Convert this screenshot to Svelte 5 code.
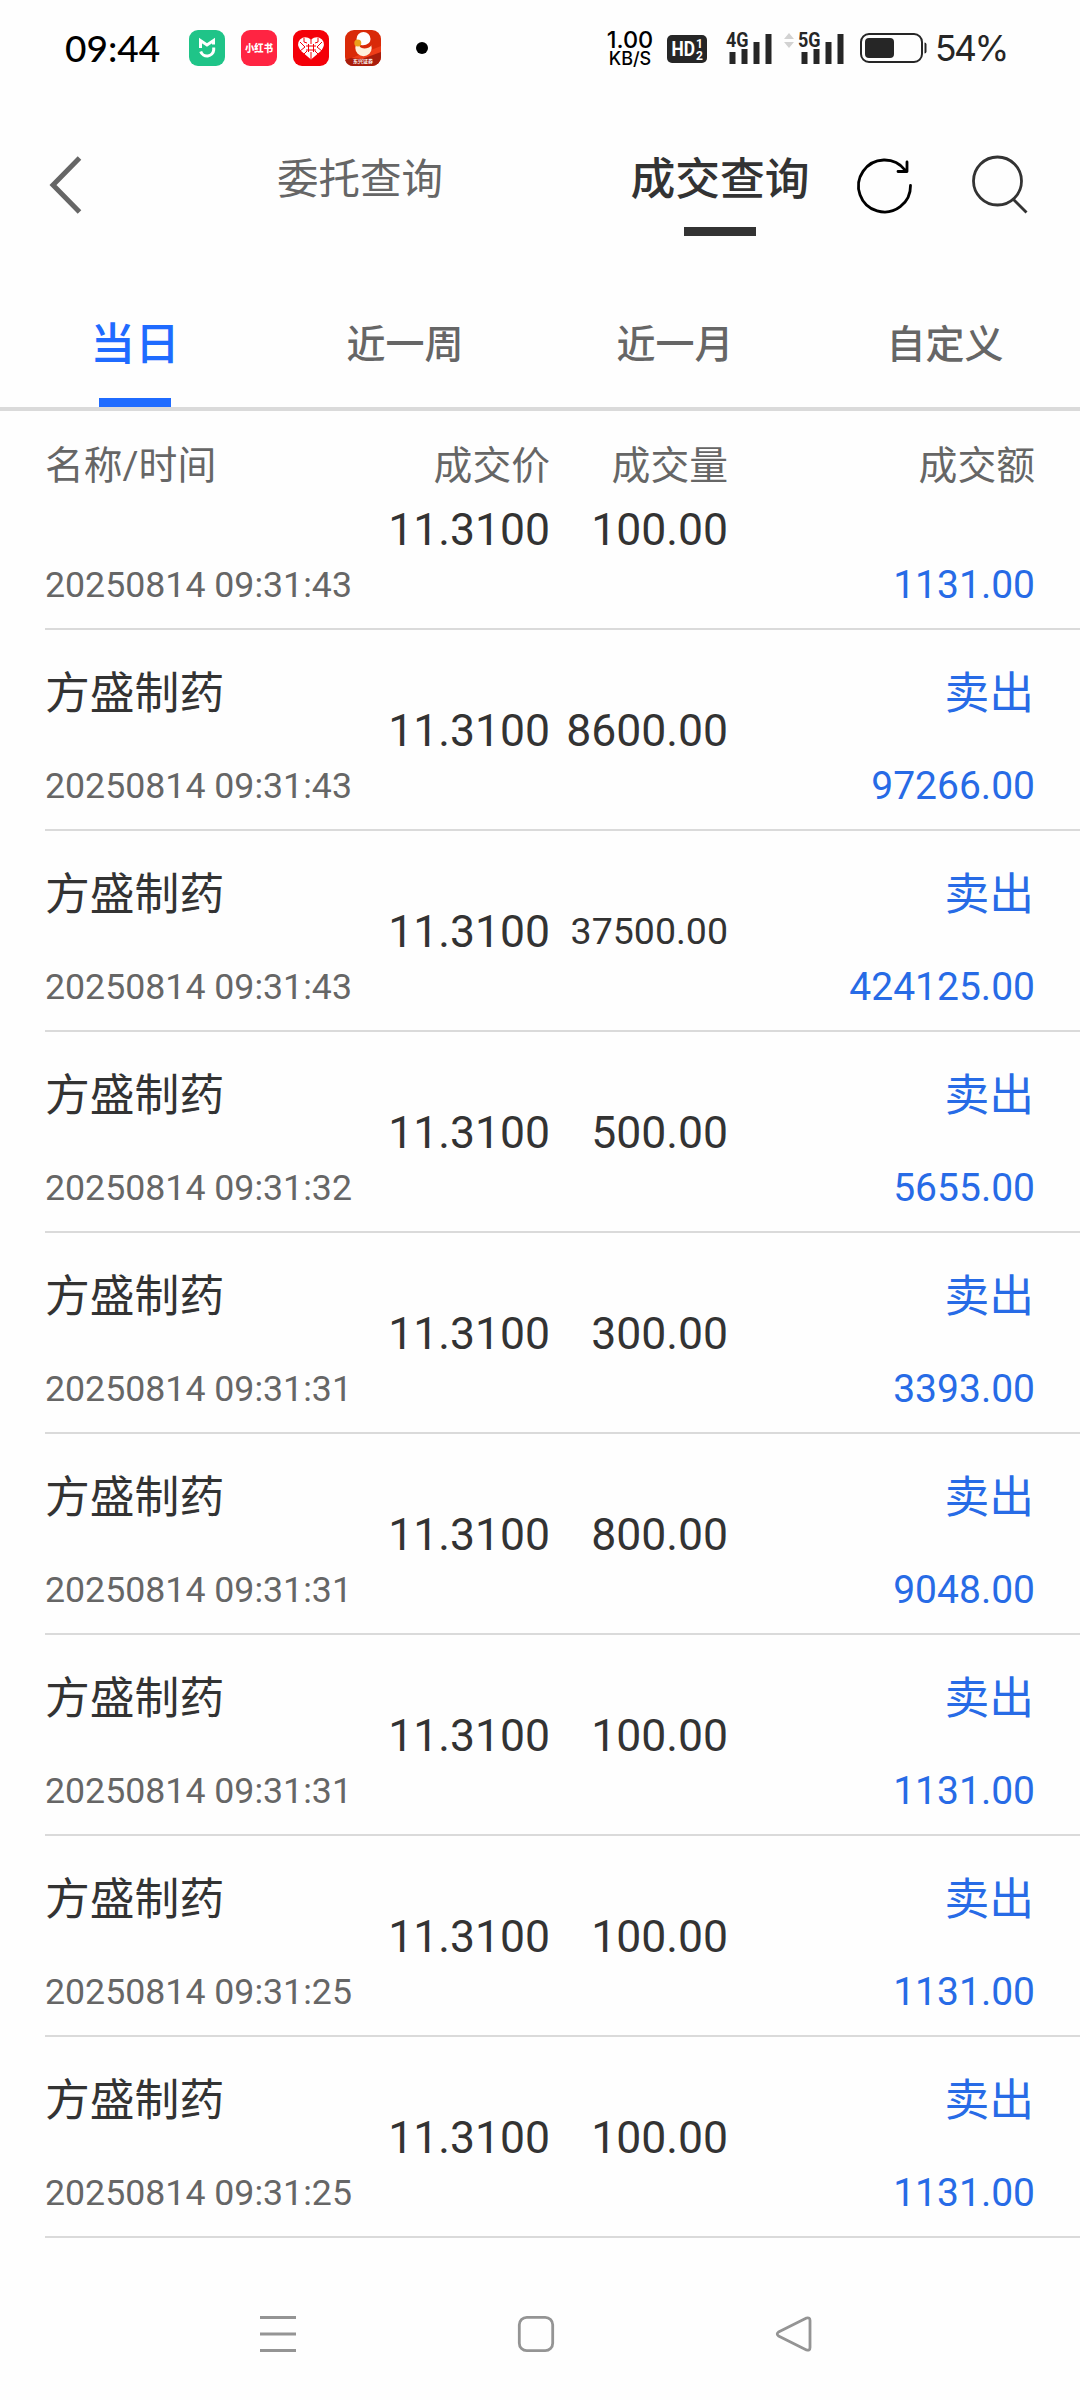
<script>
    const periods = ['当日', '近一周', '近一月', '自定义'];
    let activePeriod = '当日';

    const trades = [
        { time: '20250814 09:31:43', price: '11.3100', volume: '100.00', amount: '1131.00' },
        { time: '20250814 09:31:43', price: '11.3100', volume: '8600.00', amount: '97266.00' },
        { time: '20250814 09:31:43', price: '11.3100', volume: '37500.00', amount: '424125.00' },
        { time: '20250814 09:31:32', price: '11.3100', volume: '500.00', amount: '5655.00' },
        { time: '20250814 09:31:31', price: '11.3100', volume: '300.00', amount: '3393.00' },
        { time: '20250814 09:31:31', price: '11.3100', volume: '800.00', amount: '9048.00' },
        { time: '20250814 09:31:31', price: '11.3100', volume: '100.00', amount: '1131.00' },
        { time: '20250814 09:31:25', price: '11.3100', volume: '100.00', amount: '1131.00' },
        { time: '20250814 09:31:25', price: '11.3100', volume: '100.00', amount: '1131.00' }
    ];
</script>

<div class="screen">
    <div class="status">
        <span class="clock">09:44</span>
        <div class="apps">
            <svg width="36" height="36" viewBox="0 0 36 36">
                <rect width="36" height="36" rx="9" fill="#1fc488" />
                <path d="M11.500 18V10.500l6.500 4.500 6.500-4.500v4M24.700 17.500v2.500a6.700 6.700 0 0 1-13 1.500" fill="none" stroke="#fff" stroke-width="3" />
            </svg>
            <svg width="36" height="36" viewBox="0 0 36 36">
                <rect width="36" height="36" rx="9" fill="#ff2442" />
                <text class="redbook" x="4" y="21.500" textLength="28" lengthAdjust="spacingAndGlyphs">小红书</text>
            </svg>
            <svg width="36" height="36" viewBox="0 0 36 36">
                <rect width="36" height="36" rx="9" fill="#f40009" />
                <path d="M18 29.500L7.500 20.500Q3 14 7 9.500Q12 5 18 9.500Q24 5 29 9.500Q33 14 28.500 20.500Z" fill="#fff" />
                <path d="M18 9v5M18 22v7M15.500 14v8M20.500 14v8M13 16h10M13 20h10M7 12l5 5-5 4M29 12l-5 5 5 4M11 8v4l3 1M25 8v4l-3 1M11 24l3-3M25 24l-3-3" fill="none" stroke="#f40009" stroke-width="1" />
            </svg>
            <svg width="36" height="36" viewBox="0 0 36 36">
                <rect width="36" height="36" rx="9" fill="#d92a08" />
                <path d="M0 30L36 17v10a9 9 0 0 1-9 9H9a9 9 0 0 1-9-6z" fill="#a91d0b" />
                <path d="M6 28L36 16v6L17 29z" fill="#ee3d18" />
                <circle cx="18.500" cy="18" r="8.200" fill="#fff1dc" />
                <circle cx="18.500" cy="9" r="7" fill="#fff" />
                <path d="M14 14.500q6 1 12-5 3 5-2 8-6 2-9-.5z" fill="#d92a08" />
                <path d="M16 12q5 0 9-4 1 3-1 5-4 3-8 2z" fill="#fff" />
                <circle cx="12.800" cy="13" r="3.500" fill="#eba019" />
                <text class="bank" x="18" y="33" text-anchor="middle">东兴证券</text>
            </svg>
        </div>
        <span class="dot"></span>
        <div class="speed">
            <span>1.00</span>
            <small>KB/S</small>
        </div>
        <svg class="hd" width="40" height="28" viewBox="0 0 40 28">
            <rect width="40" height="28" rx="5" fill="#262626" />
            <text x="4.500" y="21" font-size="21" textLength="23.500" lengthAdjust="spacingAndGlyphs">HD</text>
            <text x="29" y="12.500" font-size="12">1</text>
            <text x="29" y="24.500" font-size="12">2</text>
        </svg>
        <svg class="signal" width="47" height="34" viewBox="0 0 47 34">
            <text x="0" y="16" textLength="22.500" lengthAdjust="spacingAndGlyphs">4G</text>
            <path d="M3.500 21h6v12h-6zM15.500 18h6v15h-6zM27.500 11h6v22h-6zM39.500 3h6v30h-6z" />
        </svg>
        <svg class="signal five" width="60" height="34" viewBox="0 0 60 34">
            <path class="idle" d="M0 8l5-6 5 6zM0 11h10l-5 6z" />
            <text x="14" y="16" textLength="22.500" lengthAdjust="spacingAndGlyphs">5G</text>
            <path d="M17.500 21h6v12h-6zM29.500 18h6v15h-6zM41.500 11h6v22h-6zM53.500 3h6v30h-6z" />
        </svg>
        <svg class="battery" width="67" height="30" viewBox="0 0 67 30">
            <rect x="1" y="1" width="61" height="28" rx="8" fill="none" stroke="#262626" stroke-width="2" />
            <rect x="5" y="5" width="29" height="20" rx="4" fill="#262626" />
            <path d="M64.500 9.500q2 0 2 2v7q0 2-2 2z" fill="#262626" />
        </svg>
        <span class="percent">54%</span>
    </div>

    <header class="navbar">
        <svg class="back" width="34" height="58" viewBox="0 0 34 58">
            <path d="M31.500 2L5 29l26.500 27" fill="none" stroke="#666" stroke-width="5" />
        </svg>
        <button class="page-tab">委托查询</button>
        <button class="page-tab current">成交查询</button>
        <svg class="refresh" width="56" height="56" viewBox="0 0 56 56">
            <path d="M53.500 27.500A26 26 0 1 1 48 12M50 4v9.500h-9" fill="none" stroke="#000" stroke-width="2.800" stroke-linecap="round" stroke-linejoin="round" />
        </svg>
        <svg class="search" width="56" height="58" viewBox="0 0 56 58">
            <circle cx="25.500" cy="25" r="24" fill="none" stroke="#333" stroke-width="2.800" />
            <path d="M41.500 43.500L54.500 56.500" stroke="#333" stroke-width="2.800" />
        </svg>
    </header>

    <div class="periods">
        {#each periods as period}
            <button class="period" class:active={period === activePeriod} on:click={() => (activePeriod = period)}>
                {period}
            </button>
        {/each}
    </div>

    <div class="columns head">
        <span>名称/时间</span>
        <span>成交价</span>
        <span>成交量</span>
        <span>成交额</span>
    </div>

    <div class="list">
        {#each trades as trade}
            <div class="columns trade">
                <div class="pair">
                    <span class="name">方盛制药</span>
                    <span class="time">{trade.time}</span>
                </div>
                <span class="number">{trade.price}</span>
                <span class="number" class:long={trade.volume.length > 7}>{trade.volume}</span>
                <div class="pair sell">
                    <span class="name">卖出</span>
                    <span class="amount">{trade.amount}</span>
                </div>
            </div>
        {/each}
    </div>

    <nav class="system">
        <svg width="36" height="36" viewBox="0 0 36 36">
            <path d="M0 1.500h36M0 18h36M0 34.500h36" />
        </svg>
        <svg width="36" height="36" viewBox="0 0 36 36">
            <rect x="1.300" y="1.300" width="33.400" height="33.400" rx="7.500" />
        </svg>
        <svg width="36" height="36" viewBox="0 0 36 36">
            <path d="M30.500 2L2.500 16Q0 18 2.500 20L30.500 34Q34 35 34 31.500V4.500Q34 1 30.500 2z" />
        </svg>
    </nav>
</div>

<style>
    :global(body) {
        background: #fefefe;
    }

    .screen {
        width: 1080px;
        height: 2400px;
        overflow: hidden;
        display: flex;
        flex-direction: column;
        background: #fefefe;
        color: #333;
        font-family: Roboto, 'Noto Sans CJK SC', sans-serif;
    }

    svg {
        display: block;
        flex: none;
        overflow: visible;
    }

    button {
        border: 0;
        padding: 0;
        background: none;
        font-family: inherit;
    }

    .status {
        height: 96px;
        box-sizing: border-box;
        display: flex;
        align-items: center;
        padding-left: 65px;
        color: #262626;
        white-space: nowrap;
    }

    .clock {
        width: 124px;
        padding-bottom: 2px;
        font: 500 37px Lato, sans-serif;
        color: #000;
    }

    .apps {
        display: flex;
        gap: 16px;
    }

    .redbook {
        font: 900 10px 'Noto Sans CJK SC', sans-serif;
        fill: #fff;
    }

    .bank {
        font: 700 5px 'Noto Sans CJK SC', sans-serif;
        fill: #fff;
    }

    .dot {
        width: 12px;
        height: 12px;
        margin-left: 35px;
        border-radius: 50%;
        background: #000;
    }

    .speed {
        width: 50px;
        margin-left: 177px;
        padding-top: 2px;
        display: flex;
        flex-direction: column;
        align-items: center;
        font: 500 23.500px/20px Inter, sans-serif;
        color: #000;
    }

    .speed small {
        font-size: 18px;
        line-height: 18px;
    }

    .hd {
        margin: 2px 19px 0 12px;
    }

    .hd text {
        font-family: Roboto, sans-serif;
        font-weight: 700;
        fill: #fff;
    }

    .signal {
        fill: #262626;
    }

    .signal text {
        font: 700 21px Roboto, sans-serif;
    }

    .five {
        margin-left: 11px;
    }

    .idle {
        fill: #d2d2d2;
    }

    .battery {
        margin-left: 16px;
    }

    .percent {
        margin-left: 8px;
        font: 400 35.500px Inter, sans-serif;
        letter-spacing: -2.500px;
    }

    .navbar {
        height: 205px;
        display: flex;
        align-items: flex-start;
        box-sizing: border-box;
        padding: 60px 0 0 48px;
    }

    .back {
        margin-right: 158px;
    }

    .page-tab {
        width: 240px;
        height: 80px;
        padding-top: 2px;
        display: flex;
        flex-direction: column;
        align-items: center;
        font-size: 41.500px;
        line-height: 43px;
        color: #666;
    }

    .page-tab.current {
        margin-left: 120px;
        font-size: 44.800px;
        font-weight: 500;
        color: #333;
    }

    .current::after {
        content: '';
        width: 72px;
        height: 9px;
        margin-top: 26px;
        background: #333;
    }

    .refresh {
        margin: 2px 0 0 17px;
    }

    .search {
        margin-left: 59px;
    }

    .periods {
        height: 110px;
        box-sizing: border-box;
        display: grid;
        grid-template-columns: repeat(4, 1fr);
        border-bottom: 4px solid #dadada;
    }

    .period {
        display: flex;
        flex-direction: column;
        align-items: center;
        justify-content: flex-start;
        padding-top: 22px;
        font-size: 39px;
        font-weight: 500;
        line-height: 44px;
        color: #666;
    }

    .period.active {
        font-size: 44.800px;
        color: #1f6bff;
    }

    .active::after {
        content: '';
        width: 72px;
        height: 9px;
        margin-top: 31px;
        background: #1f6bff;
    }

    .columns {
        display: grid;
        grid-template-columns: 325px 180px 178px 307px;
        align-items: center;
        text-align: right;
    }

    .columns > :first-child {
        text-align: left;
    }

    .head {
        height: 102px;
        padding: 0 45px;
        font-size: 38.800px;
        color: #666;
    }

    .list {
        height: 1725px;
        overflow: hidden;
    }

    .trade {
        height: 199px;
        margin-left: 45px;
        border-bottom: 2px solid #dadada;
    }

    /* the list is scrolled part of a row under the column titles */
    .trade:first-child {
        margin-top: -84px;
    }

    .trade:first-child .name {
        visibility: hidden;
    }

    .pair {
        display: flex;
        flex-direction: column;
        gap: 40px;
        padding-top: 20px;
    }

    .name {
        font-size: 44.800px;
        line-height: 53px;
    }

    .time,
    .amount {
        font-size: 35.700px;
        line-height: 53px;
        color: #666;
        white-space: nowrap;
    }

    .number {
        padding-top: 3px;
        font-size: 44.500px;
    }

    .long {
        padding-top: 1px;
        font-size: 37.500px;
    }

    .sell .name,
    .sell .amount {
        color: #276be6;
    }

    .sell .name {
        padding-right: 1px;
    }

    .sell .amount {
        font-size: 39px;
    }

    .system {
        flex: 1;
        display: flex;
        justify-content: center;
        gap: 222px;
        padding: 78px 8px 0 0;
    }

    .system svg {
        fill: none;
        stroke: #949494;
        stroke-width: 2.800;
        stroke-linejoin: round;
    }
</style>
